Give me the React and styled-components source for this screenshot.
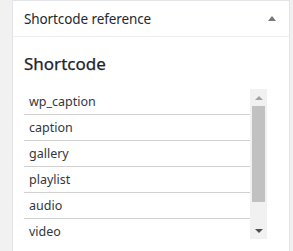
import React from "react";
import styled, { createGlobalStyle } from "styled-components";

const Global = createGlobalStyle`
  html, body { margin: 0; padding: 0; background: #f1f1f1; }
  body { font-family: "Noto Sans", "Open Sans", sans-serif; }
`;

const Page = styled.div`
  padding: 0 3px 0 12px;
  height: 251px;
  overflow: hidden;
`;

const Panel = styled.section`
  background: #fff;
  border: 1px solid #e2e4e7;
  border-bottom: none;
  height: 300px;
`;

const Header = styled.header`
  display: flex;
  align-items: center;
  justify-content: space-between;
  height: 35px;
  padding: 0 12px 0 11px;
  border-bottom: 1px solid #eeeeee;
`;

const HeaderTitle = styled.h3`
  margin: 0;
  font-size: 13.5px;
  font-weight: 400;
  color: #23282d;
  letter-spacing: -0.1px;
`;

const Toggle = styled.span`
  display: block;
  width: 0;
  height: 0;
  border-left: 4px solid transparent;
  border-right: 4px solid transparent;
  border-bottom: 5px solid #72777c;
  margin-right: 1px;
`;

const Body = styled.div`
  padding: 14px 11px 0 11px;
`;

const Heading = styled.h2`
  margin: 0 0 12px;
  font-size: 17px;
  line-height: 26px;
  font-weight: 400;
  color: #1d2327;
  -webkit-text-stroke: 0.25px #1d2327;
`;

const ListBox = styled.div`
  display: flex;
  height: 150px;
  margin-right: 11px;
`;

const List = styled.ul`
  flex: 1;
  margin: 0;
  padding: 0;
  list-style: none;
  overflow: hidden;
`;

const Item = styled.li`
  height: 25px;
  line-height: 25px;
  padding-left: 5px;
  border-bottom: 1px solid #d0d0d0;
  font-size: 12.5px;
  color: #32373c;
`;

const Scrollbar = styled.div`
  width: 17px;
  display: flex;
  flex-direction: column;
  background: #f1f1f1;
`;

const ScrollButton = styled.div`
  height: 17px;
  display: flex;
  align-items: center;
  justify-content: center;
`;

const Arrow = styled.span`
  width: 0;
  height: 0;
  border-left: 4px solid transparent;
  border-right: 4px solid transparent;
  ${(p) =>
    p.$dir === "up"
      ? `border-bottom: 4px solid ${p.$color};`
      : `border-top: 4px solid ${p.$color};`}
`;

const Track = styled.div`
  flex: 1;
  padding: 0 2px;
`;

const Thumb = styled.div`
  height: 96px;
  background: #c1c1c1;
`;

const items = ["wp_caption", "caption", "gallery", "playlist", "audio", "video", "embed"];

export default function App() {
  return (
    <>
      <Global />
      <Page>
        <Panel>
          <Header>
            <HeaderTitle>Shortcode reference</HeaderTitle>
            <Toggle />
          </Header>
          <Body>
            <Heading>Shortcode</Heading>
            <ListBox>
              <List>
                {items.map((it) => (
                  <Item key={it}>{it}</Item>
                ))}
              </List>
              <Scrollbar>
                <ScrollButton>
                  <Arrow $dir="up" $color="#a3a3a3" />
                </ScrollButton>
                <Track>
                  <Thumb />
                </Track>
                <ScrollButton>
                  <Arrow $dir="down" $color="#505050" />
                </ScrollButton>
              </Scrollbar>
            </ListBox>
          </Body>
        </Panel>
      </Page>
    </>
  );
}
